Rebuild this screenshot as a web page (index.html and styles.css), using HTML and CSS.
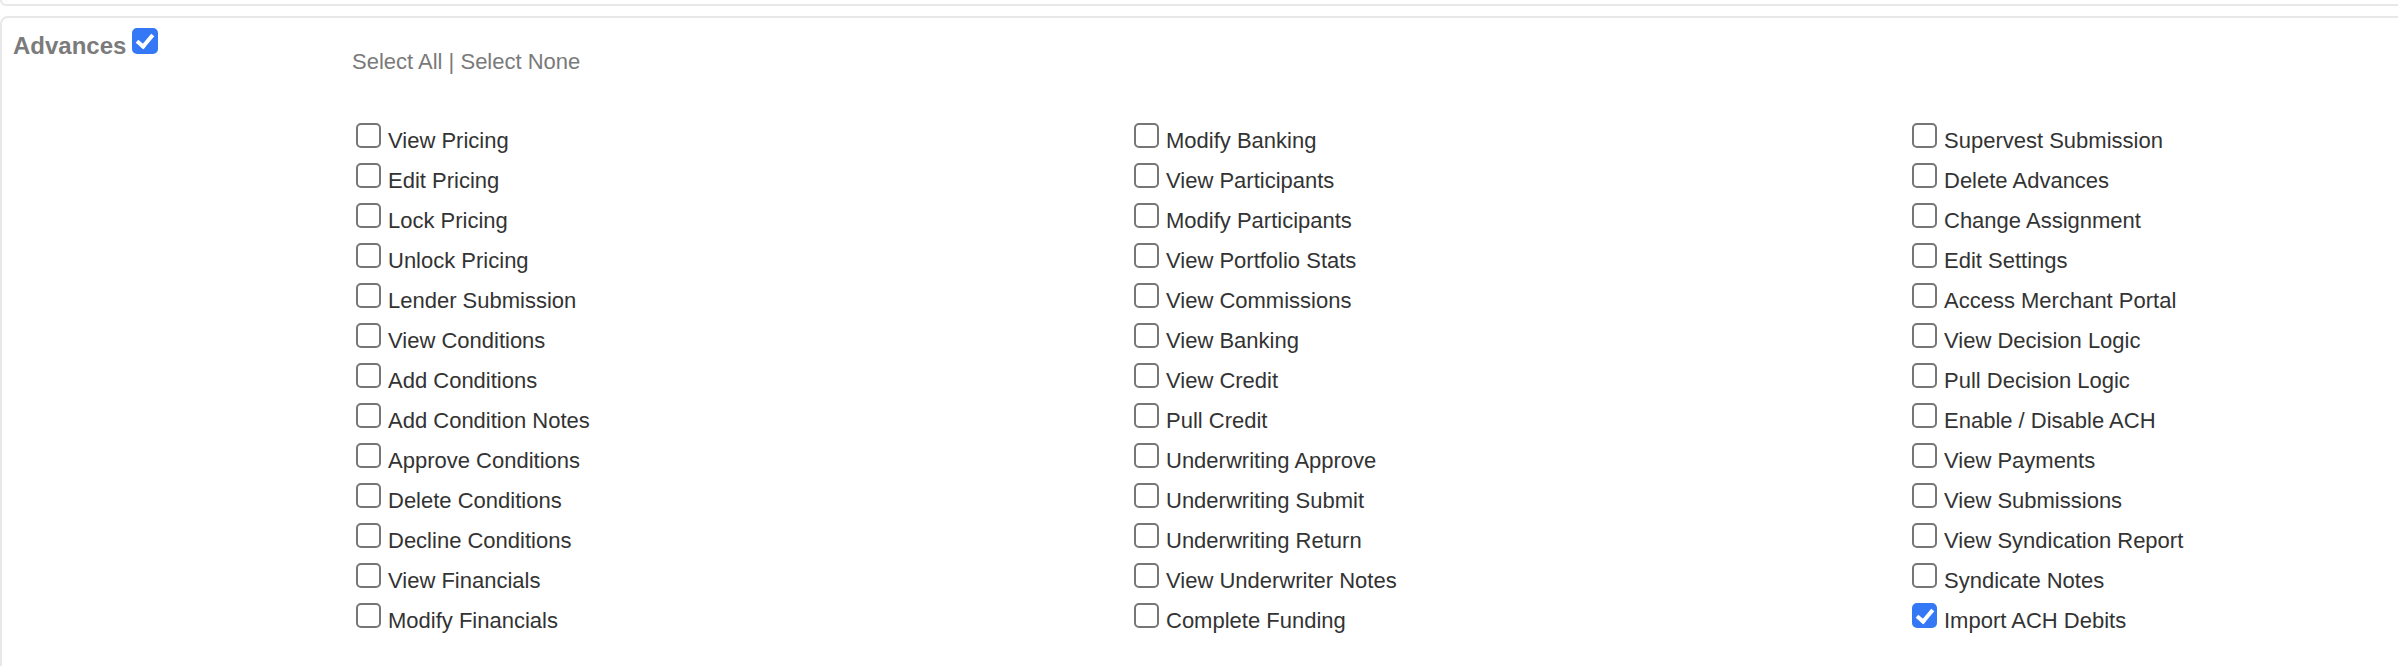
FILE: index.html
```html
<!DOCTYPE html>
<html lang="en">
<head>
<meta charset="utf-8">
<title>Permissions</title>
<link rel="stylesheet" href="styles.css">
</head>
<body>
<div class="page">
  <div class="prev-card"></div>
  <section class="card">
    <div class="title"><span>Advances</span><input type="checkbox" class="cb cb-title" checked></div>
    <div class="body">
      <div class="select-links"><a class="link">Select All</a> | <a class="link">Select None</a></div>
      <div class="perm-grid">
        <div class="perm-col">
          <label class="perm"><input type="checkbox" class="cb">View Pricing</label>
          <label class="perm"><input type="checkbox" class="cb">Edit Pricing</label>
          <label class="perm"><input type="checkbox" class="cb">Lock Pricing</label>
          <label class="perm"><input type="checkbox" class="cb">Unlock Pricing</label>
          <label class="perm"><input type="checkbox" class="cb">Lender Submission</label>
          <label class="perm"><input type="checkbox" class="cb">View Conditions</label>
          <label class="perm"><input type="checkbox" class="cb">Add Conditions</label>
          <label class="perm"><input type="checkbox" class="cb">Add Condition Notes</label>
          <label class="perm"><input type="checkbox" class="cb">Approve Conditions</label>
          <label class="perm"><input type="checkbox" class="cb">Delete Conditions</label>
          <label class="perm"><input type="checkbox" class="cb">Decline Conditions</label>
          <label class="perm"><input type="checkbox" class="cb">View Financials</label>
          <label class="perm"><input type="checkbox" class="cb">Modify Financials</label>
        </div>
        <div class="perm-col">
          <label class="perm"><input type="checkbox" class="cb">Modify Banking</label>
          <label class="perm"><input type="checkbox" class="cb">View Participants</label>
          <label class="perm"><input type="checkbox" class="cb">Modify Participants</label>
          <label class="perm"><input type="checkbox" class="cb">View Portfolio Stats</label>
          <label class="perm"><input type="checkbox" class="cb">View Commissions</label>
          <label class="perm"><input type="checkbox" class="cb">View Banking</label>
          <label class="perm"><input type="checkbox" class="cb">View Credit</label>
          <label class="perm"><input type="checkbox" class="cb">Pull Credit</label>
          <label class="perm"><input type="checkbox" class="cb">Underwriting Approve</label>
          <label class="perm"><input type="checkbox" class="cb">Underwriting Submit</label>
          <label class="perm"><input type="checkbox" class="cb">Underwriting Return</label>
          <label class="perm"><input type="checkbox" class="cb">View Underwriter Notes</label>
          <label class="perm"><input type="checkbox" class="cb">Complete Funding</label>
        </div>
        <div class="perm-col">
          <label class="perm"><input type="checkbox" class="cb">Supervest Submission</label>
          <label class="perm"><input type="checkbox" class="cb">Delete Advances</label>
          <label class="perm"><input type="checkbox" class="cb">Change Assignment</label>
          <label class="perm"><input type="checkbox" class="cb">Edit Settings</label>
          <label class="perm"><input type="checkbox" class="cb">Access Merchant Portal</label>
          <label class="perm"><input type="checkbox" class="cb">View Decision Logic</label>
          <label class="perm"><input type="checkbox" class="cb">Pull Decision Logic</label>
          <label class="perm"><input type="checkbox" class="cb">Enable / Disable ACH</label>
          <label class="perm"><input type="checkbox" class="cb">View Payments</label>
          <label class="perm"><input type="checkbox" class="cb">View Submissions</label>
          <label class="perm"><input type="checkbox" class="cb">View Syndication Report</label>
          <label class="perm"><input type="checkbox" class="cb">Syndicate Notes</label>
          <label class="perm"><input type="checkbox" class="cb" checked>Import ACH Debits</label>
        </div>
      </div>
    </div>
  </section>
</div>
</body>
</html>
```

FILE: styles.css
```css
html {
  overflow: hidden;
}

body {
  margin: 0;
  background: #ffffff;
  font-family: "Liberation Sans", Arial, Helvetica, sans-serif;
}

.page {
  width: 2420px;
}

.prev-card {
  height: 4px;
  border: 2px solid #e8e8e8;
  border-top: 0;
  border-radius: 0 0 8px 8px;
  margin-bottom: 10px;
}

.card {
  display: flex;
  align-items: flex-start;
  border: 2px solid #e8e8e8;
  border-radius: 8px;
  padding: 10px 0 60px 11px;
}

.title {
  flex: none;
  width: 339px;
  font-size: 24px;
  font-weight: bold;
  line-height: 30px;
  color: #7b7b7b;
}

.body {
  padding-top: 14px;
}

.select-links {
  font-size: 22px;
  line-height: 40px;
  color: #7a7a7a;
}

.link {
  color: #7a7a7a;
  text-decoration: none;
  cursor: pointer;
}

.perm-grid {
  display: grid;
  grid-template-columns: repeat(3, 778px);
  margin-top: 39px;
}

.perm {
  display: block;
  font-size: 22px;
  line-height: 40px;
  color: #333333;
  white-space: nowrap;
}

.cb {
  -webkit-appearance: none;
  appearance: none;
  position: relative;
  box-sizing: border-box;
  width: 25px;
  height: 25px;
  margin: 0 7px 0 4px;
  border: 2px solid #767676;
  border-radius: 5px;
  background: #ffffff;
  vertical-align: baseline;
}

.cb:checked {
  background: #3478f6;
  border-color: #3478f6;
}

.cb:checked::after {
  content: "";
  position: absolute;
  left: 6px;
  top: 1px;
  width: 6px;
  height: 13px;
  border: solid #ffffff;
  border-width: 0 4px 4px 0;
  transform: rotate(40deg);
}

.cb-title {
  width: 26px;
  height: 26px;
  margin: 0 0 0 6px;
}
```
